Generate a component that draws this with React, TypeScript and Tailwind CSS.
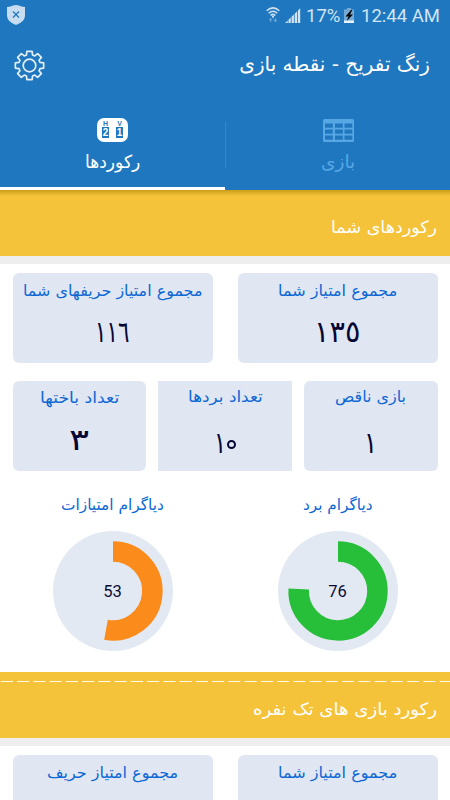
import { useLayoutEffect, useRef, useState } from "react";
import { clsx } from "clsx";

/* Right-to-left label condensed horizontally so that it fills its column. */
function Label({ text, className }: { text: string; className: string }) {
  const box = useRef<HTMLDivElement>(null);
  const inner = useRef<HTMLSpanElement>(null);
  const [scale, setScale] = useState(1);
  useLayoutEffect(() => {
    if (box.current && inner.current) {
      setScale(box.current.clientWidth / inner.current.offsetWidth);
    }
  }, [text]);
  return (
    <div ref={box} dir="rtl" className={clsx("shrink-0 whitespace-nowrap font-['DejaVu_Sans',sans-serif]", className)}>
      <span ref={inner} className="inline-block origin-right" style={{ transform: `scaleX(${scale})` }}>
        {text}
      </span>
    </div>
  );
}

function Shield() {
  return (
    <svg width="20" height="22" viewBox="0 0 20 22">
      <path d="M1 3Q5 2.6 7 1.4Q10 0.4 13 1.4Q15 2.6 19 3V12Q18.500 18 10 21Q1.500 18 1 12Z" fill="#c7dcef" />
      <path d="M7 7.500L13 13.500M13 7.500L7 13.500" stroke="#1f78bf" strokeWidth="1.200" />
    </svg>
  );
}

function Wifi() {
  return (
    <svg width="14" height="16" viewBox="0 0 14 16" fill="none" stroke="#cfe1f2" strokeWidth="1.500">
      <path d="M0.700 3.700Q7-1.900 13.300 3.700M2.700 6.200Q7 2.400 11.300 6.200M4.600 8.500Q7 6.300 9.400 8.500" />
      <circle cx="7" cy="9.700" r="1.100" fill="#cfe1f2" stroke="none" />
      <path d="M4.700 15V11.500M3.200 13L4.700 11.300L6.200 13M9.300 11V14.500M7.800 13L9.300 14.700L10.800 13" stroke="#76acd9" strokeWidth="1" />
    </svg>
  );
}

function Signal() {
  return (
    <svg width="16" height="15" viewBox="0 0 16 15" fill="#d2e4f3">
      <path d="M0 15L2.700 12.500V15ZM3.500 11.700L5.800 9.500V15H3.500ZM6.600 8.700L8.900 6.500V15H6.600ZM9.700 5.700L12 3.500V15H9.700ZM12.800 2.700L15.200 0.300V15H12.800Z" />
    </svg>
  );
}

function Battery() {
  return (
    <svg width="10" height="15" viewBox="0 0 10 15">
      <path d="M3 0H7V1.500H10V15H0V1.500H3Z" fill="#73a9d5" />
      <path d="M0 12.500H10V15H0Z" fill="#e9f2f9" />
      <path d="M7 2L1.500 8.500H4.500L2.700 13L9 6.500H6L8.300 2Z" fill="#050607" />
    </svg>
  );
}

function Gear() {
  const pts: string[] = [];
  for (let i = 0; i < 8; i++) {
    const a = (i * Math.PI) / 4 - Math.PI / 2;
    const p = (r: number, d: number) => `${(15.5 + r * Math.cos(a + d)).toFixed(2)} ${(15.5 + r * Math.sin(a + d)).toFixed(2)}`;
    pts.push(p(10.9, -0.285), p(14.4, -0.185), p(14.4, 0.185), p(10.9, 0.285));
  }
  return (
    <svg width="31" height="31" viewBox="0 0 31 31" fill="none" stroke="#e3eef8" strokeWidth="1.700" strokeLinejoin="round">
      <path d={`M${pts.join("L")}Z`} />
      <circle cx="15.500" cy="15.500" r="6.300" />
    </svg>
  );
}

function Scoreboard() {
  return (
    <div className="flex h-6 w-[31px] justify-center gap-[7px] rounded-[7px] bg-white pt-[2px] font-['Liberation_Sans',sans-serif] font-bold">
      {[["H", "2"], ["V", "1"]].map(([side, score]) => (
        <div key={side} className="flex w-[7px] flex-col items-center">
          <span className="h-[6px] text-[7px] leading-[7px] text-[#1f78bf]">{side}</span>
          <span className="mt-px h-[11px] w-[7px] bg-[#1f78bf] text-center text-[10px] leading-[11px] text-white">{score}</span>
        </div>
      ))}
    </div>
  );
}

function TableIcon() {
  return (
    <svg width="31" height="23" viewBox="0 0 31 23">
      <rect width="31" height="23" rx="1.500" fill="#57a7e4" />
      {[4.5, 10.5, 16.5].map((y) =>
        [2, 12, 21.5].map((x) => <rect key={`${x}-${y}`} x={x} y={y} width="7.800" height="4.200" fill="#2077bd" />),
      )}
    </svg>
  );
}

function Section({ children, dashed }: { children: React.ReactNode; dashed?: boolean }) {
  return (
    <div className="h-[74px] shrink-0 border-b-8 border-[#eeeeee] bg-[#f4c33a]">
      {dashed ? (
        <svg className="block" width="450" height="24" viewBox="0 0 450 24">
          <path d="M0.700 9.500H450" stroke="#fffbe6" strokeWidth="1.200" strokeDasharray="12.300 3.950" />
        </svg>
      ) : (
        <div className="mb-[18px] h-[6px] bg-linear-to-b from-[#cb9c13] to-[#f4c33a]" />
      )}
      <div dir="rtl" className="pr-[13px]">{children}</div>
    </div>
  );
}

type CardProps = {
  className: string;
  title: string;
  titleClass: string;
  value?: string;
  valueClass?: string;
  ring?: boolean;
};

function Card({ className, title, titleClass, value, valueClass, ring }: CardProps) {
  return (
    <div className={clsx("flex h-[90px] shrink-0 flex-col items-center bg-[#e0e6f2]", className)}>
      <Label text={title} className={clsx("h-[36px] text-[15.500px] text-[#0d68d5]", titleClass)} />
      {value && (
        <div className="flex h-[46px] items-start">
          <Label text={value} className={clsx("text-[30px] leading-[46px] text-[#060634]", valueClass)} />
          {ring && <div className="mt-[23px] h-[9px] w-[9px] rounded-full border-2 border-[#060634]" />}
        </div>
      )}
    </div>
  );
}

function Donut({ value, arc, color }: { value: number; arc: string; color: string }) {
  return (
    <div className="relative mt-[9px] h-[120px] w-[120px]">
      <svg width="120" height="120" viewBox="0 0 120 120">
        <circle cx="60" cy="60" r="60" fill="#e2e9f3" />
        <path d={arc} fill="none" stroke={color} strokeWidth="20.500" />
      </svg>
      <span className="absolute inset-0 text-center font-[Roboto,sans-serif] text-[16.500px] leading-[121px] text-[#0b0b35]">{value}</span>
    </div>
  );
}

export default function App() {
  return (
    <div className="flex h-[800px] w-[450px] flex-col overflow-hidden bg-white">
      <header className="h-[190px] shrink-0 bg-[#1f78bf]">
        <div className="flex h-[30px] items-start pl-[6px] pt-[4px] text-[#d2e4f3]">
          <Shield />
          <div className="ml-[240px] mt-[3px]"><Wifi /></div>
          <div className="ml-[5px] mt-[4px]"><Signal /></div>
          <span className="ml-[5px] w-[36px] font-[Roboto,sans-serif] text-[18.500px] leading-[24px]">17%</span>
          <div className="ml-[2px] mt-[4px]"><Battery /></div>
          <span className="ml-[7px] whitespace-nowrap font-[Roboto,sans-serif] text-[18.500px] leading-[24px]">12:44 AM</span>
        </div>
        <div className="flex h-[70px] items-center justify-between pl-[14px] pr-[20px]">
          <Gear />
          <Label text="زنگ تفریح - نقطه بازی" className="w-[191px] pb-[2px] text-[20px] leading-[40px] text-white" />
        </div>
        <nav className="flex h-[90px]">
          <div className="flex w-[225px] flex-col items-center border-b-[3px] border-white pt-[18px]">
            <Scoreboard />
            <Label text="رکوردها" className="mt-[5px] w-[55px] text-[18px] leading-[30px] text-white" />
          </div>
          <div className="mt-[22px] h-[46px] w-px bg-[#3987c8]" />
          <div className="flex w-[224px] flex-col items-center pt-[19px]">
            <TableIcon />
            <Label text="بازی" className="mt-[5px] w-[34px] text-[18px] leading-[30px] text-[#57a7e4]" />
          </div>
        </nav>
      </header>
      <Section>
        <Label text="رکوردهای شما" className="w-[106px] text-[17px] leading-[26px] text-white" />
      </Section>
      <div className="flex h-[117px] shrink-0 justify-between px-[12.500px] pt-[9px]">
        <Card className="w-[200px] rounded-md" title="مجموع امتیاز حریفهای شما" titleClass="w-[179px] leading-[36px]" value="١١٦" valueClass="w-[34px]" />
        <Card className="w-[200px] rounded-md" title="مجموع امتیاز شما" titleClass="w-[119px] leading-[36px]" value="١٣٥" valueClass="w-[46px]" />
      </div>
      <div className="flex h-[109px] shrink-0 justify-between px-[12.500px]">
        <Card className="w-[133.500px] rounded-md" title="تعداد باختها" titleClass="w-[79px] leading-[35px]" value="٣" valueClass="w-[20px]" />
        <Card className="w-[133.500px]" title="تعداد بردها" titleClass="w-[75px] leading-[33px]" value="١" valueClass="mt-[3px] w-[12px]" ring />
        <Card className="w-[133.500px] rounded-md" title="بازی ناقص" titleClass="w-[71px] leading-[33px]" value="١" valueClass="mt-[3px] w-[13px]" />
      </div>
      <div className="flex h-[182px] shrink-0">
        <div className="flex w-[225px] flex-col items-center">
          <Label text="دیاگرام امتیازات" className="w-[103px] pb-px text-[15.500px] leading-[31px] text-[#0d68d5]" />
          <Donut value={53} arc="M60 20.600A39.400 39.400 0 1 1 53 98.780" color="#fb8b1a" />
        </div>
        <div className="flex w-[225px] flex-col items-center">
          <Label text="دیاگرام برد" className="w-[69px] pb-px text-[15.500px] leading-[31px] text-[#0d68d5]" />
          <Donut value={76} arc="M60 20.600A39.400 39.400 0 1 1 20.700 58" color="#27bf3a" />
        </div>
      </div>
      <Section dashed>
        <Label text="رکورد بازی های تک نفره" className="w-[184px] text-[17px] leading-[26px] text-white" />
      </Section>
      <div className="flex shrink-0 justify-between px-[12.500px] pt-[9px]">
        <Card className="w-[200px] rounded-md" title="مجموع امتیاز حریف" titleClass="w-[131px] leading-[36px]" />
        <Card className="w-[200px] rounded-md" title="مجموع امتیاز شما" titleClass="w-[119px] leading-[36px]" />
      </div>
    </div>
  );
}
